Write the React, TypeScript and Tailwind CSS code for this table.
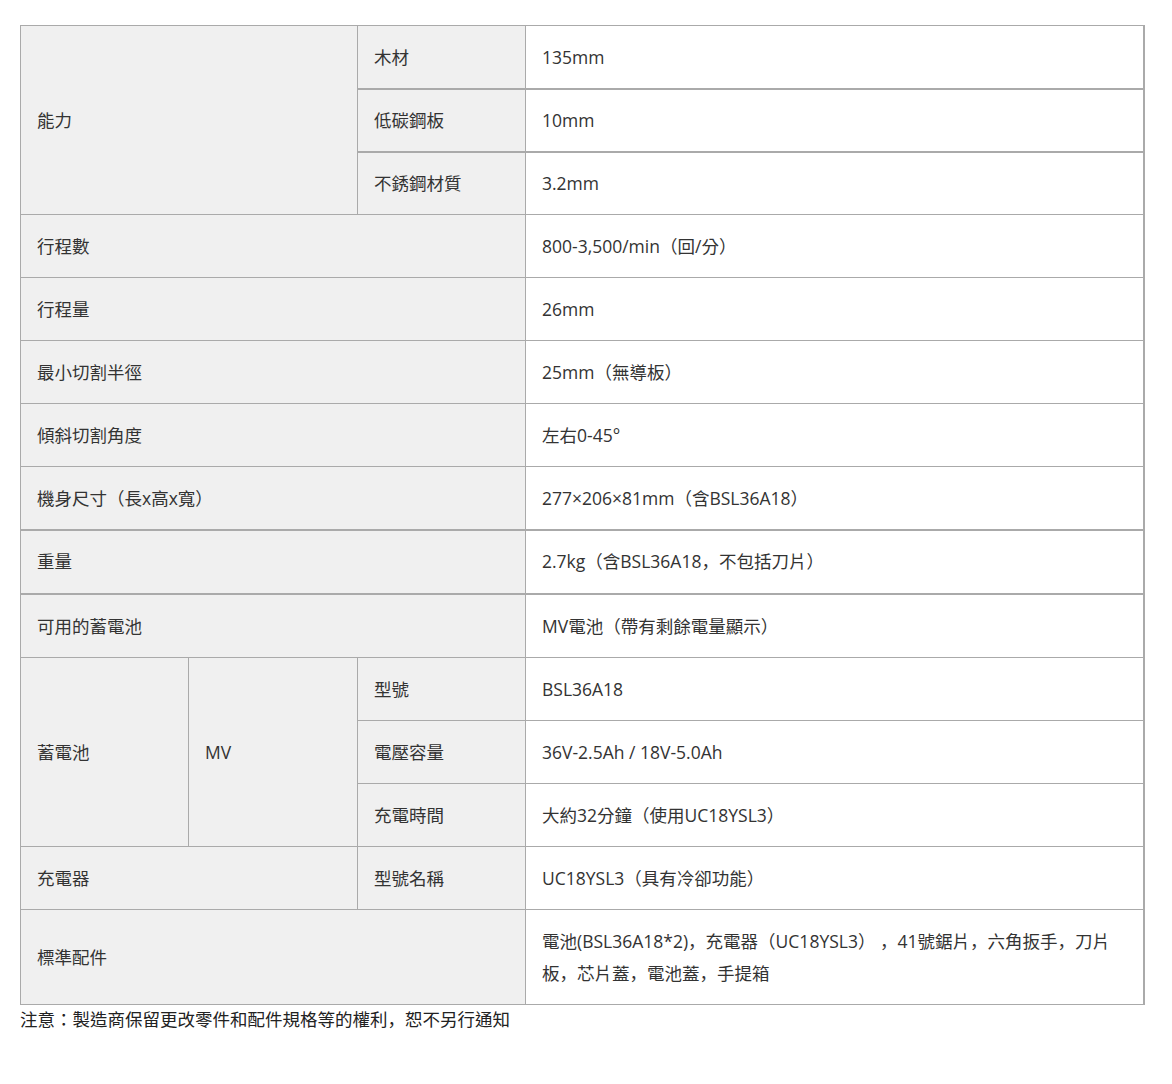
const font = { fontFamily: '"Open Sans", "Noto Sans CJK TC", sans-serif' };

const th = "bg-[#f0f0f0] border border-[#aaa] px-4 align-middle text-left font-normal";
const td = "bg-white border border-[#aaa] border-r-2 px-4 align-middle";

// full-width comma sits low-left in the reference, as in JP fonts
function C() {
  return <span style={{ fontFamily: '"Noto Sans CJK JP", sans-serif' }}>，</span>;
}

export default function App() {
  return (
    <div className="bg-white min-h-[1084px] pt-[25px] pl-[20px] text-[#333] text-[17.5px]" style={font}>
      <table className="w-[1125px] table-fixed border-collapse">
        <colgroup>
          <col className="w-[168px]" />
          <col className="w-[169px]" />
          <col className="w-[168px]" />
          <col />
        </colgroup>
        <tbody>
          <tr className="h-[63px]">
            <th rowSpan={3} colSpan={2} className={th}>能力</th>
            <th className={th}>木材</th>
            <td className={td}>135mm</td>
          </tr>
          <tr className="h-[63px]">
            <th className={`${th} border-t-2`}>低碳鋼板</th>
            <td className={`${td} border-t-2`}>10mm</td>
          </tr>
          <tr className="h-[63px]">
            <th className={`${th} border-t-2`}>不銹鋼材質</th>
            <td className={`${td} border-t-2`}>3.2mm</td>
          </tr>
          <tr className="h-[63px]">
            <th colSpan={3} className={th}>行程數</th>
            <td className={td}>800-3,500/min（回/分）</td>
          </tr>
          <tr className="h-[63px]">
            <th colSpan={3} className={th}>行程量</th>
            <td className={td}>26mm</td>
          </tr>
          <tr className="h-[63px]">
            <th colSpan={3} className={th}>最小切割半徑</th>
            <td className={td}>25mm（無導板）</td>
          </tr>
          <tr className="h-[63px]">
            <th colSpan={3} className={th}>傾斜切割角度</th>
            <td className={td}>左右0-45°</td>
          </tr>
          <tr className="h-[63px]">
            <th colSpan={3} className={th}>機身尺寸（長x高x寬）</th>
            <td className={td}>277×206×81mm（含BSL36A18）</td>
          </tr>
          <tr className="h-[64px]">
            <th colSpan={3} className={`${th} border-t-2`}>重量</th>
            <td className={`${td} border-t-2`}>2.7kg（含BSL36A18<C />不包括刀片）</td>
          </tr>
          <tr className="h-[64px]">
            <th colSpan={3} className={`${th} border-t-2`}>可用的蓄電池</th>
            <td className={`${td} border-t-2`}>MV電池（帶有剩餘電量顯示）</td>
          </tr>
          <tr className="h-[63px]">
            <th rowSpan={3} className={th}>蓄電池</th>
            <th rowSpan={3} className={th}>MV</th>
            <th className={th}>型號</th>
            <td className={td}>BSL36A18</td>
          </tr>
          <tr className="h-[63px]">
            <th className={th}>電壓容量</th>
            <td className={td}>36V-2.5Ah / 18V-5.0Ah</td>
          </tr>
          <tr className="h-[63px]">
            <th className={th}>充電時間</th>
            <td className={td}>大約32分鐘（使用UC18YSL3）</td>
          </tr>
          <tr className="h-[63px]">
            <th colSpan={2} className={th}>充電器</th>
            <th className={th}>型號名稱</th>
            <td className={td}>UC18YSL3（具有冷卻功能）</td>
          </tr>
          <tr className="h-[95px]">
            <th colSpan={3} className={th}>標準配件</th>
            <td className={`${td} leading-[32px]`}>
              電池(BSL36A18*2)<C />充電器（UC18YSL3） <C />41號鋸片<C />六角扳手<C />刀片板<C />芯片蓋<C />電池蓋<C />手提箱
            </td>
          </tr>
        </tbody>
      </table>
      <p className="mt-[1px] text-[#222] leading-[26px]">
        注意：製造商保留更改零件和配件規格等的權利<C />恕不另行通知
      </p>
    </div>
  );
}
